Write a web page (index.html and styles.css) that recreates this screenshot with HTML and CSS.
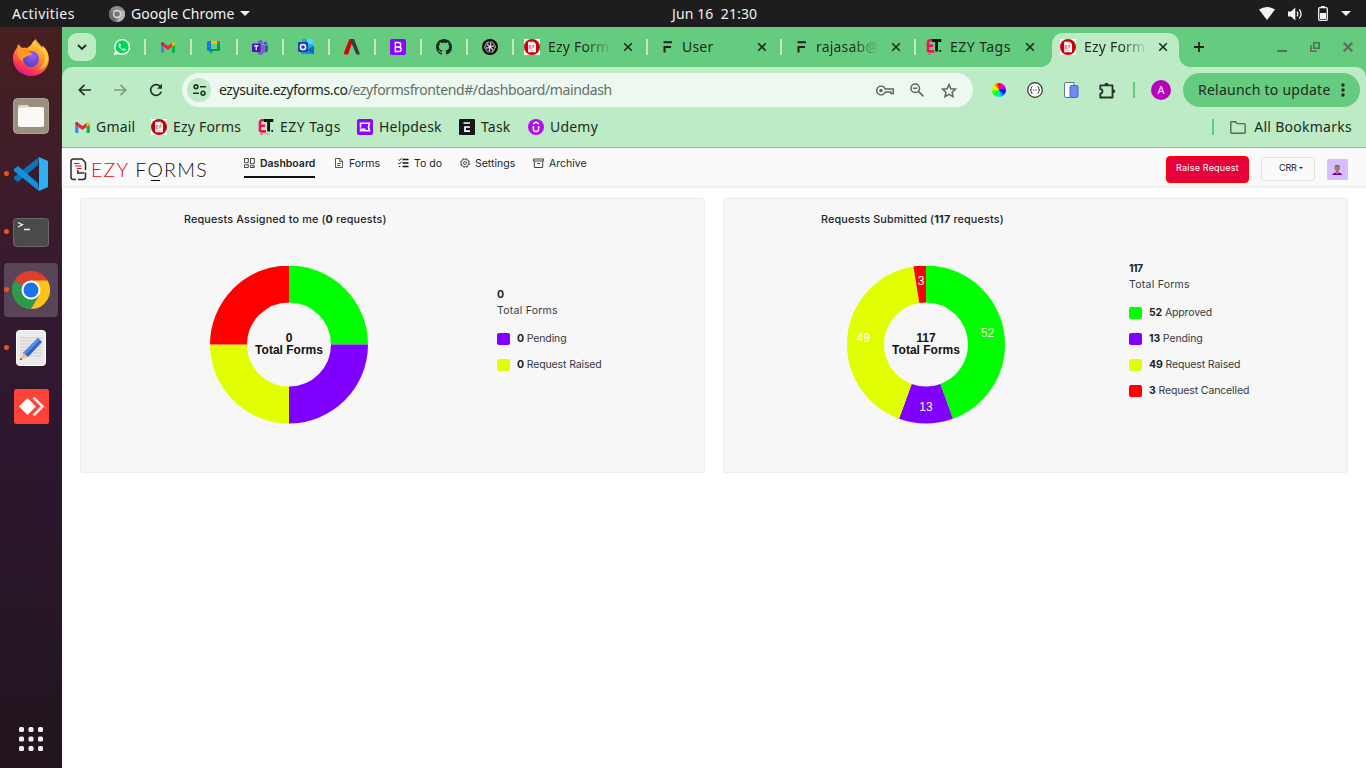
FILE: index.html
```html
<!DOCTYPE html>
<html lang="en">
<head>
<meta charset="utf-8">
<title>Ezy Forms</title>
<link rel="stylesheet" href="styles.css">
</head>
<body>
<svg class="defs" width="0" height="0" aria-hidden="true">
  <symbol id="x" viewBox="0 0 10 10"><path d="M1.200 1.200l7.600 7.600M8.800 1.200L1.200 8.800" stroke="#1f2a22" stroke-width="1.600" fill="none"/></symbol>
  <symbol id="gmail" viewBox="0 0 16 12"><path d="M1 12h2.600V5.200L0 2.400V11a1 1 0 0 0 1 1z" fill="#4285f4"/><path d="M12.400 12H15a1 1 0 0 0 1-1V2.400l-3.600 2.800z" fill="#00b84c"/><path d="M12.400 1v4.200L16 2.500V1.800C16 .2 14.200-.5 13 .5z" fill="#ffba00"/><path d="M3.600 5.400V1L8 4.300 12.400 1v4.400L8 8.800z" fill="#f2212f"/><path d="M0 1.800v.7l3.600 2.900V1L3 .5C1.800-.5 0 .2 0 1.800z" fill="#c5221f"/></symbol>
  <symbol id="ef" viewBox="0 0 16 16"><path d="M0 0h16v16H0z" fill="#fff"/><circle cx="8" cy="8" r="8" fill="#c8000c"/><path d="M4.200 2.700h5.600l2.200 2.300v8.300H4.200z" fill="#fff"/><path d="M9.500 2.700v2.500H12M5.500 11.500h5" stroke="#bbb" stroke-width=".7" fill="none"/><path d="M5.400 6.500h2M5.400 8h2M5.400 9.500h2M5.700 6.500v3M8.700 6.500h2M8.700 8h1.600M8.900 6.500v3.200" stroke="#e95a58" stroke-width=".8"/></symbol>
  <symbol id="et" viewBox="0 0 16 16"><path d="M7 1.200H4.500Q2 1.200 2 4v7q0 1.400 1.500 1.400H8M2 6.700h5" stroke="#ff0a54" stroke-width="2.600" fill="none"/><path d="M6 1.500h9.300M10.600 1v11.600" stroke="#111" stroke-width="2.800"/><path d="M13.300 11h1.800v1.800h-1.800z" fill="#111"/><path d="M2 15.200h3" stroke="#777" stroke-width="1"/><path d="M7 15.200h5" stroke="#e88" stroke-width="1"/></symbol>
  <symbol id="ff" viewBox="0 0 10 12"><path d="M1 1.200h8.500" stroke="#222" stroke-width="2"/><path d="M2 11.500V6h6.500" stroke="#222" stroke-width="2" fill="none"/></symbol>
</svg>

<div class="topbar">
  <span class="activities">Activities</span>
  <svg class="tb-chrome" width="16" height="16" viewBox="0 0 16 16"><circle cx="8" cy="8" r="8" fill="#8d8d8d"/><path d="M8 8L1 4A8 8 0 0 0 7 16z" fill="#6d6d6d"/><path d="M8 4.500h7.300A8 8 0 0 1 8 16l3-6z" fill="#b5b5b5"/><circle cx="8" cy="8" r="4.200" fill="#ddd"/><circle cx="8" cy="8" r="2.800" fill="#777"/></svg>
  <span class="appname">Google Chrome</span>
  <svg class="caret" width="10" height="5"><path d="M0 0h10L5 5z" fill="#f2f2f2"/></svg>
  <span class="clock">Jun 16&nbsp; 21:30</span>
  <span class="tray">
    <svg width="16" height="13" viewBox="0 0 16 13"><path d="M0 2.600Q8-2.400 16 2.600L8 13z" fill="#f2f2f2"/></svg>
    <svg width="15" height="14" viewBox="0 0 15 14"><path d="M0 4.500h3L7.300.5v13L3 9.500H0z" fill="#f2f2f2"/><path d="M9 4.700q1.600 2.300 0 4.600M11.300 2.500q3.600 4.500 0 9" stroke="#f2f2f2" stroke-width="1.300" fill="none"/></svg>
    <svg width="10" height="15" viewBox="0 0 10 15"><path d="M3 0h4v2H3z" fill="#f2f2f2"/><rect x=".7" y="1.700" width="8.600" height="12.600" rx="1" fill="none" stroke="#f2f2f2" stroke-width="1.300"/><path d="M2 7h6v6H2z" fill="#f2f2f2"/></svg>
    <svg width="10" height="5"><path d="M0 0h10L5 5z" fill="#f2f2f2"/></svg>
  </span>
</div>

<div class="desktop">
  <nav class="dock">
    <div class="app"><svg width="38" height="38" viewBox="0 0 38 38"><defs><linearGradient id="fx" x1=".8" y1="0" x2=".3" y2="1"><stop offset="0" stop-color="#ffe14a"/><stop offset=".45" stop-color="#ff9328"/><stop offset=".75" stop-color="#ff4050"/><stop offset="1" stop-color="#d9128a"/></linearGradient><radialGradient id="fp" cx=".6" cy=".3" r=".8"><stop offset="0" stop-color="#9a5cff"/><stop offset="1" stop-color="#4b3fb5"/></radialGradient></defs><path d="M1 20C1 14 3 11 5 9l1-4 4 4q3-1 5 0l4-3q2-4 5-6 0 5 4 8l3 1-1-3q6 5 7 13C37 30 29 37 19 37S1 29 1 20z" fill="url(#fx)"/><circle cx="19" cy="20" r="8" fill="url(#fp)"/><path d="M5 10l7 2q4 0 7 1.500l1 2.500q-5 .5-7 2.500-3 .5-2 4Q5 20 5 10z" fill="#ff9928"/><path d="M24 1q0 5 5 9 6 5 3 13-2 7-9 8 14-1 13-14-1-6-6-9z" fill="#ffd43b" opacity=".85"/></svg></div>
    <div class="app"><svg width="36" height="36" viewBox="0 0 36 36"><rect x=".5" y=".5" width="35" height="35" rx="4" fill="#989080" stroke="#aaa391"/><path d="M6 9a2 2 0 0 1 2-2h6l2 2h1v8H6z" fill="#ddd8ca"/><rect x="5" y="9" width="26" height="20" rx="2" fill="#fbfaf7"/><path d="M5 10V8.500Q5 7 6.500 7H14q1.500 0 2 2.200z" fill="#ddd8ca"/></svg></div>
    <div class="app running"><svg width="34" height="34" viewBox="0 0 34 34"><path d="M25 0l-1 8L4 25 0 22v-2z" fill="#0d72b8"/><path d="M25 34l-1-8L4 9 0 12v2z" fill="#1490df"/><path d="M25 0l9 4v26l-9 4z" fill="#2bb0f4"/><path d="M25 8v18l-11-9z" fill="#361c2e"/></svg></div>
    <div class="app running"><svg width="36" height="29" viewBox="0 0 36 29"><rect x=".5" y=".5" width="35" height="28" rx="3" fill="#4b4b4b" stroke="#686868"/><path d="M5 4.500l4.500 2.300L5 9M11 11.500h6" stroke="#eee" stroke-width="1.300" fill="none"/></svg></div>
    <div class="app running focused"><svg width="38" height="38" viewBox="0 0 38 38"><path d="M19 19L2.500 9.500A19 19 0 0 1 35.500 9.500z" fill="#dc3e31"/><path d="M19 19L2.500 9.500A19 19 0 0 0 19 38l8.300-14.200z" fill="#2d9b4b"/><path d="M19 9.500h16.500A19 19 0 0 1 19 38l8.300-14z" fill="#fcc419"/><circle cx="19" cy="19" r="9.500" fill="#fff"/><circle cx="19" cy="19" r="7.500" fill="#1a73e8"/></svg></div>
    <div class="app running"><svg width="30" height="36" viewBox="0 0 30 36"><rect x=".5" y=".5" width="29" height="35" rx="3" fill="#ebebeb" stroke="#fff"/><path d="M4 8h22M4 11h22M4 14h22M4 17h22M4 20h22M4 23h22M4 26h22" stroke="#c4c4c4" stroke-width=".8"/><path d="M22 8l4 4-14 15-5-4z" fill="#2f63d2"/><path d="M22 8l2 2-15 15-2-2z" fill="#5a8af0"/><path d="M7 23l5 4-8 3z" fill="#edc49a"/><path d="M4.500 28l2 1.300L4 30z" fill="#333"/></svg></div>
    <div class="app"><svg width="35" height="35" viewBox="0 0 35 35"><rect width="35" height="35" rx="2.500" fill="#ff4138"/><path d="M13.500 9l8.500 8.500-8.500 8.500L5 17.500z" fill="#fff"/><path d="M19 9.500l1.500-1.500L30 17.500 20.500 27 19 25.500l8-8z" fill="#fff" stroke="#fff" stroke-width=".5"/></svg></div>
    <svg class="show-apps" width="26" height="26" viewBox="0 0 26 26" fill="#f2efee"><rect x="1" y="1" width="5" height="5" rx="1.500"/><rect x="10.500" y="1" width="5" height="5" rx="1.500"/><rect x="20" y="1" width="5" height="5" rx="1.500"/><rect x="1" y="10.500" width="5" height="5" rx="1.500"/><rect x="10.500" y="10.500" width="5" height="5" rx="1.500"/><rect x="20" y="10.500" width="5" height="5" rx="1.500"/><rect x="1" y="20" width="5" height="5" rx="1.500"/><rect x="10.500" y="20" width="5" height="5" rx="1.500"/><rect x="20" y="20" width="5" height="5" rx="1.500"/></svg>
  </nav>

  <div class="browser">
    <div class="tabstrip">
      <div class="tabsearch"><svg width="10" height="7"><path d="M1 1l4 4 4-4" stroke="#1f2a22" stroke-width="1.800" fill="none"/></svg></div>
      <div class="pin"><svg width="16" height="16" viewBox="0 0 16 16"><path d="M0 16l1.200-4.200A8 8 0 1 1 4.200 14.900z" fill="#fff"/><circle cx="8.100" cy="7.900" r="6.600" fill="#00d757"/><path d="M5.400 4.300q-1.300.7-.8 2.400 1.400 4 5 5 1.700.2 2.100-1.500l-2-1-1 1Q7 9.400 6.200 7.700l.8-1-.8-2.100z" fill="#fff"/></svg></div>
      <div class="pin"><svg width="14" height="11"><use href="#gmail"/></svg></div>
      <div class="pin"><svg width="14" height="14" viewBox="0 0 14 14"><path d="M0 3h4v8H1a1 1 0 0 1-1-1z" fill="#1a73e8"/><path d="M1.500 1H10v3.500H0V2.500Q0 1 1.500 1z" fill="#1a73e8"/><path d="M4 1h6v3H4z" fill="#fbbc04"/><path d="M10 1h2q1 0 1 1v2h-3z" fill="#ea4335"/><path d="M10 4h3v6q0 1-1 1H6l-3 3V9h7z" fill="#00a344"/><path d="M4 4h6v5H4z" fill="#64cc7f"/></svg></div>
      <div class="pin"><svg width="16" height="15" viewBox="0 0 16 15"><circle cx="8.500" cy="2.500" r="2.500" fill="#7b5be8"/><circle cx="13.500" cy="3.300" r="1.800" fill="#5059c9"/><path d="M5 5h7v7q-1 3-4 3-3-1-3-4z" fill="#8058e0"/><path d="M12.500 5.500H16V10q-.5 3-3.500 2.500z" fill="#4b45b8"/><rect y="3.500" width="8.500" height="8.500" rx="1" fill="#4b16a8"/><path d="M2 5.800h4.500M4.250 5.800v4.500" stroke="#fff" stroke-width="1.200"/></svg></div>
      <div class="pin"><svg width="16" height="16" viewBox="0 0 16 16"><path d="M4 0h11v10H4z" fill="#28a8ea"/><path d="M9 0h6v5H9z" fill="#50d9ff"/><path d="M3 7l6 3 7-3v8H3z" fill="#1490df"/><path d="M16 7v8L9 11z" fill="#1366b8"/><rect y="3" width="10" height="10" rx="1" fill="#2141b5"/><circle cx="5" cy="8" r="2.600" stroke="#fff" stroke-width="1.500" fill="none"/></svg></div>
      <div class="pin"><svg width="16" height="16" viewBox="0 0 16 16"><path d="M5.500 0h4L4 15.500H.5L0 13.500z" fill="#d8000b"/><path d="M8 0h2l6 15.500h-3.500L7 3z" fill="#3b3b3b"/></svg></div>
      <div class="pin"><svg width="16" height="16" viewBox="0 0 16 16"><rect width="16" height="16" rx="2" fill="#8a05ff"/><path d="M5.300 3.500h3.200q2.300 0 2.300 2.200Q10.800 8 8.500 8H5.300zM5.300 8h3.500q2.400 0 2.400 2.200 0 2.300-2.500 2.300H5.300z" stroke="#fff" stroke-width="1.300" fill="none"/></svg></div>
      <div class="pin"><svg width="16" height="16" viewBox="0 0 16 16"><path fill="#1c2a25" d="M8 0C3.580 0 0 3.580 0 8c0 3.540 2.290 6.530 5.470 7.590.4.070.55-.17.550-.38 0-.19-.01-.82-.01-1.490-2.010.37-2.530-.49-2.690-.94-.09-.23-.48-.94-.82-1.130-.28-.15-.68-.52-.01-.53.630-.01 1.080.58 1.230.82.720 1.210 1.870.87 2.330.66.070-.52.280-.87.510-1.070-1.780-.2-3.640-.89-3.640-3.950 0-.87.310-1.590.820-2.150-.08-.2-.36-1.020.08-2.120 0 0 .67-.21 2.200.82.640-.18 1.320-.27 2-.27s1.360.09 2 .27c1.530-1.040 2.200-.82 2.200-.82.440 1.100.160 1.920.08 2.120.510.560.820 1.270.820 2.150 0 3.070-1.870 3.750-3.650 3.950.290.250.540.730.540 1.480 0 1.070-.01 1.930-.01 2.200 0 .21.150.46.550.38A8 8 0 0 0 16 8c0-4.420-3.580-8-8-8z"/></svg></div>
      <div class="pin"><svg width="16" height="16" viewBox="0 0 16 16"><circle cx="8" cy="8" r="8" fill="#050505"/><g fill="none" stroke="#ddd" stroke-width=".75"><path id="pt" d="M8 3q2.800-1 3.800 1.400.3 1 0 2L8 8.600V5.500L10.800 4"/><use href="#pt" transform="rotate(60 8 8)"/><use href="#pt" transform="rotate(120 8 8)"/><use href="#pt" transform="rotate(180 8 8)"/><use href="#pt" transform="rotate(240 8 8)"/><use href="#pt" transform="rotate(300 8 8)"/></g></svg></div>
      <div class="tab"><svg width="16" height="16"><use href="#ef"/></svg><span class="label fade">Ezy Form</span><svg class="close" width="10" height="10"><use href="#x"/></svg></div>
      <div class="tab"><svg class="fico" width="16" height="12"><use href="#ff"/></svg><span class="label">User</span><svg class="close" width="10" height="10"><use href="#x"/></svg></div>
      <div class="tab"><svg class="fico" width="16" height="12"><use href="#ff"/></svg><span class="label fade">rajasab@</span><svg class="close" width="10" height="10"><use href="#x"/></svg></div>
      <div class="tab last"><svg width="16" height="16"><use href="#et"/></svg><span class="label wide">EZY Tags</span><svg class="close" width="10" height="10"><use href="#x"/></svg></div>
      <div class="tab active"><svg width="16" height="16"><use href="#ef"/></svg><span class="label fade">Ezy Form</span><svg class="close" width="10" height="10"><use href="#x"/></svg></div>
      <svg class="newtab" width="12" height="12"><path d="M6 1v10M1 6h10" stroke="#1f2a22" stroke-width="1.800"/></svg>
      <div class="winbtns">
        <svg width="10" height="12"><path d="M0 10h10" stroke="#5d6a61" stroke-width="2"/></svg>
        <svg width="10" height="10" viewBox="0 0 10 10"><path d="M3.800.8h5.400v5.400H3.800zM.8 3v6.200H7" stroke="#5d6a61" stroke-width="1.600" fill="none"/></svg>
        <svg width="10" height="10" viewBox="0 0 10 10"><path d="M.8.8l8.400 8.400M9.200.8L.8 9.200" stroke="#5d6a61" stroke-width="2.200"/></svg>
      </div>
    </div>

    <div class="chrome">
      <div class="toolbar">
        <svg class="nav-b" width="13" height="12" viewBox="0 0 13 12"><path d="M6.500.8L1.300 6l5.200 5.200M1.300 6H13" stroke="#26332a" stroke-width="1.700" fill="none"/></svg>
        <svg class="nav-f" width="13" height="12" viewBox="0 0 13 12"><path d="M6.500.8L11.700 6l-5.200 5.200M11.700 6H0" stroke="#7f9c87" stroke-width="1.700" fill="none"/></svg>
        <svg class="nav-r" width="14" height="14" viewBox="0 0 14 14"><path d="M12.200 8.700A5.400 5.400 0 1 1 11 3.300L12.300 4.800" stroke="#26332a" stroke-width="1.700" fill="none"/><path d="M13 .8v5H8z" fill="#26332a"/></svg>
        <div class="omnibox">
          <span class="site"><svg width="13" height="12" viewBox="0 0 13 12"><g stroke="#26332a" stroke-width="1.600" fill="none"><circle cx="3" cy="2.800" r="1.900"/><path d="M7 2.800h6M0 9.200h6"/><circle cx="10" cy="9.200" r="1.900"/></g></svg></span>
          <span class="url"><b>ezysuite.ezyforms.co</b>/ezyformsfrontend#/dashboard/maindash</span>
          <svg class="key" width="18" height="11" viewBox="0 0 18 11"><g stroke="#5b655e" stroke-width="1.400" fill="none"><path d="M9.200 4H17.300V8.500H14.800V7H9.200A4.400 4.400 0 1 1 9.200 4z"/></g><circle cx="5" cy="5.500" r="1.700" fill="#5b655e"/></svg>
          <svg class="mag" width="14" height="14" viewBox="0 0 14 14"><circle cx="5.200" cy="5.200" r="4.300" stroke="#5b655e" stroke-width="1.500" fill="none"/><path d="M8.400 8.400l5 5M3.200 5.200h4" stroke="#5b655e" stroke-width="1.500"/></svg>
          <svg class="star" width="16" height="15" viewBox="0 0 16 15"><path d="M8 1.600l1.900 4.100 4.500.5-3.300 3 .9 4.400L8 11.400l-4 2.200.9-4.400-3.300-3 4.500-.5z" stroke="#5b655e" stroke-width="1.500" fill="none"/></svg>
        </div>
        <span class="wheel"></span>
        <svg class="ext2" width="16" height="16" viewBox="0 0 16 16"><circle cx="8" cy="8" r="7.300" fill="#fff" stroke="#333" stroke-width="1.200"/><path d="M5.500 4.500q-1.500 0-1.200 2Q4.400 8 3 8q1.400 0 1.300 1.500-.3 2 1.200 2M10.500 4.500q1.500 0 1.200 2Q11.600 8 13 8q-1.400 0-1.300 1.500.3 2-1.200 2" stroke="#333" fill="none"/><path d="M6 8h4" stroke="#333" stroke-dasharray="1 .6"/></svg>
        <svg class="ext3" width="15" height="16" viewBox="0 0 15 16"><path d="M.5 2Q.5.500 2 .5h8v15H2Q.5 15.500.5 14z" fill="#fff" stroke="#5f7898"/><rect x="6" y="3.500" width="8" height="12" rx="1.500" fill="#7088f4" stroke="#4a62cf"/></svg>
        <svg class="puz" width="17" height="17" viewBox="0 0 17 17"><path d="M1.300 3.300h12.200v12.200H1.300v-3.900q2.200-.2 2.200-2.300T1.300 7.200z" stroke="#26332a" stroke-width="1.800" fill="none" stroke-linejoin="round"/><path d="M5.500 3q0-2.300 2-2.300t2 2.300zM13.800 7.300q2.500 0 2.500 2t-2.500 2z" fill="#26332a"/></svg>
        <span class="vsep"></span>
        <span class="avatar">A</span>
        <span class="relaunch"><span>Relaunch to update</span><svg width="4" height="14"><circle cx="2" cy="2" r="1.700" fill="#1f2a22"/><circle cx="2" cy="7" r="1.700" fill="#1f2a22"/><circle cx="2" cy="12" r="1.700" fill="#1f2a22"/></svg></span>
      </div>
      <div class="bookmarks">
        <span class="bm b1"><svg width="15" height="11"><use href="#gmail"/></svg><span>Gmail</span></span>
        <span class="bm b2"><svg width="16" height="16"><use href="#ef"/></svg><span>Ezy Forms</span></span>
        <span class="bm b3"><svg width="16" height="16"><use href="#et"/></svg><span>EZY Tags</span></span>
        <span class="bm b4"><svg width="16" height="16" viewBox="0 0 16 16"><rect width="16" height="16" rx="2" fill="#8a05ff"/><path d="M3.500 8.500V4.200h9L11.500 8l1 3.800h-9v-1.500h5" stroke="#fff" stroke-width="1.600" fill="none"/></svg><span>Helpdesk</span></span>
        <span class="bm b5"><svg width="16" height="16" viewBox="0 0 16 16"><rect width="16" height="16" rx="1" fill="#171717"/><path d="M4.500 4h6.500M11 8H6v4.200h5" stroke="#fff" stroke-width="1.700" fill="none"/></svg><span>Task</span></span>
        <span class="bm b6"><svg width="16" height="16" viewBox="0 0 16 16"><circle cx="8" cy="8" r="8" fill="#b70cf0"/><path d="M5 4.800L8 3l3 1.800M5.400 7v3q0 2.600 2.600 2.600t2.600-2.600V7" stroke="#fff" stroke-width="1.500" fill="none"/></svg><span>Udemy</span></span>
        <span class="vsep bmsep"></span>
        <span class="bm all"><svg width="16" height="13" viewBox="0 0 16 13"><path d="M.8 1.500q0-.7.700-.7h4l1.700 1.800h7q1 0 1 .9v7.800q0 .9-.9.900H1.700q-.9 0-.9-.9z" stroke="#5b655e" stroke-width="1.400" fill="none"/></svg><span>All Bookmarks</span></span>
      </div>
    </div>

    <main class="page">
      <header class="apphead">
        <svg class="logo-ic" width="17" height="23" viewBox="0 0 17 23"><g fill="none" stroke="#2b2b2b" stroke-width="1.500"><path d="M6 21.500H3.500Q1 21.500 1 19V3.500Q1 1 3.500 1H12l3.500 3.500V12"/><path d="M7.800 12v3h6.400M15.500 14.500V19q0 2.500-2.500 2.500H8"/></g><path d="M4 5.500h5.500M5 8h6.500M7 10.500h4.500" stroke="#e30613" stroke-width="1.100"/></svg>
        <div class="logo"><i>EZY</i> F<u>O</u>RMS</div>
        <div class="menu">
          <a class="m m1"><svg width="11" height="10" viewBox="0 0 11 10"><g stroke="#444" fill="none"><path d="M.5.5h3.800v4.200H.5zM.5 6.800h3.800v2.700H.5zM6.500.5h3.800v5.200H6.500zM6.500 7.700h3.800v1.800H6.500z"/></g></svg><span>Dashboard</span></a>
          <a class="m m2"><svg width="10" height="10" viewBox="0 0 10 10"><path d="M1.500.5h4.500l2.500 2.700v6.300h-7zM5.700.5v3h2.800M3.200 5.500h3.600M3.200 7.500h3" stroke="#444" fill="none" stroke-width=".9"/></svg><span>Forms</span></a>
          <a class="m m3"><svg width="11" height="10" viewBox="0 0 11 10"><path d="M4.500 1.500h6M4.500 5h6M4.500 8.500h6" stroke="#111" stroke-width="1.300"/><path d="M.3 1.500l1 1L3.500.3M.3 5l1 1 2.200-2.200M1 8.500h1.300" stroke="#111" fill="none"/></svg><span>To do</span></a>
          <a class="m m4"><svg width="10" height="10" viewBox="0 0 10 10"><circle cx="5" cy="5" r="4.300" stroke="#444" stroke-width="1.100" stroke-dasharray="2.200 1.177" fill="none"/><circle cx="5" cy="5" r="3.700" stroke="#555" stroke-width=".7" fill="none"/><circle cx="5" cy="5" r="1.500" stroke="#444" stroke-width=".9" fill="none"/></svg><span>Settings</span></a>
          <a class="m m5"><svg width="11" height="10" viewBox="0 0 11 10"><path d="M.5 1h10v2H.5zM1.300 3v6.500h8.400V3M4 5.500h3" stroke="#444" fill="none"/></svg><span>Archive</span></a>
        </div>
        <span class="raise">Raise Request</span>
        <span class="crr">CRR <i></i></span>
        <svg class="user" width="21" height="21" viewBox="0 0 21 21"><rect width="21" height="21" rx="1.500" fill="#d7bfff"/><path d="M5 16q1-2.500 4-2.500h2q3.500 0 4 2.500z" fill="#5c00b8"/><path d="M9 10h2.500v5H9z" fill="#b06a66"/><circle cx="10.200" cy="9.200" r="2.800" fill="#bb7474"/><path d="M7.500 8q0-2.300 2.700-2.300T13 8q-2.700-1.200-5.500 0z" fill="#3f8f62"/></svg>
      </header>

      <section class="cards">
        <article class="card c1">
          <h2>Requests Assigned to me (<b>0</b> requests)</h2>
          <div class="body">
            <svg width="158" height="158" viewBox="-79 -78.500 158 158">
              <g fill="none" stroke-width="37" transform="rotate(-90)">
                <circle r="60.500" pathLength="4" stroke="#0f0" stroke-dasharray="1 3"/>
                <circle r="60.500" pathLength="4" stroke="#8000ff" stroke-dasharray="1 3" stroke-dashoffset="-1"/>
                <circle r="60.500" pathLength="4" stroke="#e1ff00" stroke-dasharray="1 3" stroke-dashoffset="-2"/>
                <circle r="60.500" pathLength="4" stroke="#f00" stroke-dasharray="1 3" stroke-dashoffset="-3"/>
              </g>
              <g class="mid"><text y="-3">0</text><text y="9">Total Forms</text></g>
            </svg>
            <div class="legend">
              <p class="n">0</p><p class="t">Total Forms</p>
              <p class="row"><i class="purple"></i><span><b>0</b> Pending</span></p>
              <p class="row"><i class="yellow"></i><span><b>0</b> Request Raised</span></p>
            </div>
          </div>
        </article>
        <article class="card c2">
          <h2>Requests Submitted (<b>117</b> requests)</h2>
          <div class="body">
            <svg width="158" height="158" viewBox="-79 -78.500 158 158">
              <g fill="none" stroke-width="37" transform="rotate(-90)">
                <circle r="60.500" pathLength="117" stroke="#0f0" stroke-dasharray="52 65"/>
                <circle r="60.500" pathLength="117" stroke="#8000ff" stroke-dasharray="13 104" stroke-dashoffset="-52"/>
                <circle r="60.500" pathLength="117" stroke="#e1ff00" stroke-dasharray="49 68" stroke-dashoffset="-65"/>
                <circle r="60.500" pathLength="117" stroke="#f00" stroke-dasharray="3 114" stroke-dashoffset="-114"/>
              </g>
              <g class="val"><text x="61.500" y="-7.500">52</text><text x="0" y="66">13</text><text x="-62.500" y="-2.500">49</text><text x="-5" y="-59.500">3</text></g>
              <g class="mid"><text y="-3">117</text><text y="9">Total Forms</text></g>
            </svg>
            <div class="legend">
              <p class="n">117</p><p class="t">Total Forms</p>
              <p class="row"><i class="green"></i><span><b>52</b> Approved</span></p>
              <p class="row"><i class="purple"></i><span><b>13</b> Pending</span></p>
              <p class="row"><i class="yellow"></i><span><b>49</b> Request Raised</span></p>
              <p class="row"><i class="red"></i><span><b>3</b> Request Cancelled</span></p>
            </div>
          </div>
        </article>
      </section>
    </main>
  </div>
</div>
</body>
</html>
```
FILE: styles.css
```css
* { box-sizing: border-box; }
body { margin: 0; width: 1366px; height: 768px; overflow: hidden; background: #fff; font-family: "Noto Sans", "Open Sans", sans-serif; font-size: 14px; color: #1f2a22; }
svg { display: block; flex: none; }
.defs { position: absolute; }
p, h2 { margin: 0; }

/* system bar */
.topbar { height: 27px; background: #1d1d1d; color: #f2f2f2; display: flex; align-items: center; padding: 0 15px 0 12px; white-space: nowrap; }
.activities { width: 97px; letter-spacing: .45px; }
.appname { width: 109px; margin-left: 6px; }
.clock { margin-left: 422px; letter-spacing: .1px; padding-bottom: 1px; }
.tray { margin-left: auto; display: flex; align-items: center; gap: 13px; }
.tray svg:nth-child(3) { margin-left: 2px; }
.desktop { display: flex; height: 741px; }

/* dock */
.dock { width: 62px; flex: none; padding-top: 2px; background: linear-gradient(#481f1f 0, #411d28 15%, #351a2f 35%, #2d172f 55%, #251624 85%, #21141c 100%); display: flex; flex-direction: column; }
.app { height: 58px; display: flex; align-items: center; justify-content: center; position: relative; }
.running::before { content: ""; position: absolute; left: 4px; top: 26px; width: 5px; height: 5px; border-radius: 50%; background: #e95420; }
.focused { margin: 2px 4px; height: 54px; background: #5a4558; border-radius: 4px; }
.focused::before { left: 0; top: 24px; }
.show-apps { margin: auto auto 16px; }

/* browser */
.browser { flex: 1; min-width: 0; background: #65cb7e; display: flex; flex-direction: column; }
.tabstrip { height: 40px; display: flex; align-items: center; padding-left: 6px; }
.tabsearch { width: 28px; height: 28px; border-radius: 9px; background: #bdebc6; display: flex; align-items: center; justify-content: center; margin-right: 4px; }
.pin, .tab { border-right: 2px solid #bdebc6; height: 16px; display: flex; align-items: center; flex: none; }
.pin { width: 46px; justify-content: center; }
.tab { width: 134px; padding-left: 10px; }
.tab.last { border-color: transparent; width: 136px; }
.tab.active { width: 127px; height: 34px; border: 0; padding: 0 0 6px 8px; background: #bdebc6; border-radius: 11px 11px 0 0; align-self: flex-end; position: relative; }
.active::before, .active::after { content: ""; position: absolute; bottom: 0; width: 11px; height: 11px; }
.active::before { left: -11px; background: radial-gradient(circle at 0 0, transparent 10.5px, #bdebc6 11px); }
.active::after { right: -11px; background: radial-gradient(circle at 100% 0, transparent 10.5px, #bdebc6 11px); }
.label { width: 62px; margin-left: 8px; white-space: nowrap; line-height: 20px; letter-spacing: .2px; }
.wide { letter-spacing: .45px; }
.fade { -webkit-mask-image: linear-gradient(90deg, #000 60%, transparent 102%); mask-image: linear-gradient(90deg, #000 60%, transparent 102%); }
.fico { padding-left: 3px; }
.close { margin-left: 13px; }
.active .close { margin-left: 12px; }
.newtab { margin-left: 14px; }
.winbtns { margin-left: auto; margin-right: 13px; display: flex; align-items: center; gap: 23px; }
.chrome { height: 81px; background: #bdebc6; border-radius: 10px 10px 0 0; border-bottom: 1px solid #8fb699; }
.toolbar { height: 46px; display: flex; align-items: center; padding-left: 16px; }
.nav-f { margin-left: 23px; }
.nav-r { margin-left: 22px; }
.omnibox { width: 791px; height: 34px; margin-left: 19px; border-radius: 17px; background: #edf8f0; display: flex; align-items: center; padding-left: 5px; }
.site { width: 24px; height: 24px; border-radius: 50%; background: #bdebc6; display: flex; align-items: center; justify-content: center; }
.url { width: 657px; margin-left: 8px; color: #647068; white-space: nowrap; letter-spacing: -.39px; padding-bottom: 2px; }
.url b { font-weight: 400; color: #1f2a22; }
.mag { margin-left: 16px; }
.star { margin-left: 17px; }
.wheel { width: 14px; height: 14px; margin-left: 19px; border-radius: 50%; background: conic-gradient(#f00, #f0a 30deg, #80f 75deg, #00f 110deg, #00c8ff 160deg, #0fa 190deg, #0f0 230deg, #af0 280deg, #ff0 300deg, #f80 330deg, #f00); }
.ext2 { margin-left: 21px; }
.ext3 { margin-left: 21px; }
.puz { margin-left: 20px; }
.vsep { width: 2px; height: 16px; background: #65cb7e; margin-left: 17px; }
.avatar { width: 20px; height: 20px; margin-left: 16px; border-radius: 50%; background: #b800bf; color: #fff; font-size: 11px; line-height: 20px; text-align: center; }
.relaunch { width: 177px; height: 34px; margin-left: 12px; border-radius: 17px; background: #65cb7e; display: flex; align-items: center; justify-content: space-between; padding: 0 15px; white-space: nowrap; letter-spacing: .24px; }
.relaunch span { padding-bottom: 2px; }
.bookmarks { height: 34px; display: flex; align-items: center; padding: 0 14px 6px 13px; }
.bm { display: flex; align-items: center; gap: 6px; white-space: nowrap; flex: none; }
.bm span { padding-bottom: 2px; letter-spacing: .2px; }
.b1 { width: 76px; }
.b2 { width: 107px; }
.b3 { width: 99px; }
.b3 span { letter-spacing: .45px; }
.b4 { width: 102px; }
.b5 { width: 69px; }
.bmsep { margin-left: auto; margin-right: 16px; }
.all { gap: 8px; }
.all span { letter-spacing: .27px; }

/* page */
.page { flex: 1; background: #fff; font-family: Inter, "Open Sans", sans-serif; color: #212529; }
.apphead { height: 39px; background: #fafafa; border-bottom: 1px solid #ececec; box-shadow: 0 1px 1px #f6f6f6; display: flex; padding-left: 8px; }
.logo-ic { margin-top: 10px; }
.logo { width: 122px; margin: 10px 0 0 4px; font: 300 19.5px/24px Lato, sans-serif; letter-spacing: 1.25px; color: #111; white-space: nowrap; }
.logo i { font-style: normal; color: #e30613; }
.logo u { text-decoration: none; display: inline-block; background: linear-gradient(#111, #111) 4px 22px / 9px 1px no-repeat; }
.menu { display: flex; margin-left: 31px; font-size: 10.5px; height: 30px; }
.m { display: flex; align-items: center; gap: 5px; height: 30px; white-space: nowrap; }
.m1 { width: 71px; font-weight: 600; border-bottom: 2px solid #111; padding-top: 2px; }
.m2 { margin-left: 19px; width: 46px; }
.m3 { margin-left: 18px; width: 44px; }
.m4 { margin-left: 18px; width: 55px; }
.m5 { margin-left: 18px; }
.raise { width: 83px; height: 27px; margin: 8px 0 0 auto; border: 1px solid red; border-radius: 4px; background: #e6003c; color: #fff; font-size: 9px; line-height: 22px; letter-spacing: .2px; text-align: center; white-space: nowrap; }
.crr { width: 54px; height: 24px; margin: 9px 0 0 12px; border: 1px solid #dee2e6; border-radius: 3px; font-size: 9px; line-height: 20px; padding-left: 17px; white-space: nowrap; letter-spacing: -.15px; }
.crr i { display: inline-block; border: 2px solid transparent; border-top-color: #212529; border-bottom: 0; vertical-align: 2px; }
.user { margin: 11px 18px 0 12px; }
.cards { display: grid; grid-template-columns: 625px 625px; gap: 18px; padding: 11px 18px; }
.card { height: 275px; background: #f7f7f7; border: 1px solid #ececec; border-radius: 3px; }
.card h2 { font-size: 10.8px; font-weight: 500; line-height: 16px; padding-top: 13px; letter-spacing: .16px; white-space: nowrap; }
.c1 h2 { padding-left: 103px; }
.c2 h2 { padding-left: 97px; }
.body { display: flex; align-items: center; margin-top: 38px; height: 158px; }
.c1 .body { padding-left: 129px; gap: 129px; }
.c2 .body { padding-left: 123px; gap: 124px; }
.legend { font-size: 10.5px; line-height: 16px; color: #343a40; padding-bottom: 26px; white-space: nowrap; }
.legend b, .n { font-weight: 700; color: #212529; }
.n { letter-spacing: -.5px; }
.t { margin-bottom: 7px; letter-spacing: .25px; }
.row { height: 26px; display: flex; align-items: center; gap: 7px; letter-spacing: -.13px; }
.row i { width: 13px; height: 12px; border-radius: 2px; margin-top: 1px; }
.green { background: #0f0; }
.purple { background: #8000ff; }
.yellow { background: #e1ff00; }
.red { background: red; }
.mid { font: bold 12px "Liberation Sans", sans-serif; text-anchor: middle; fill: #111; }
.val { font: 12px "Liberation Sans", sans-serif; text-anchor: middle; fill: #fff; }
```
